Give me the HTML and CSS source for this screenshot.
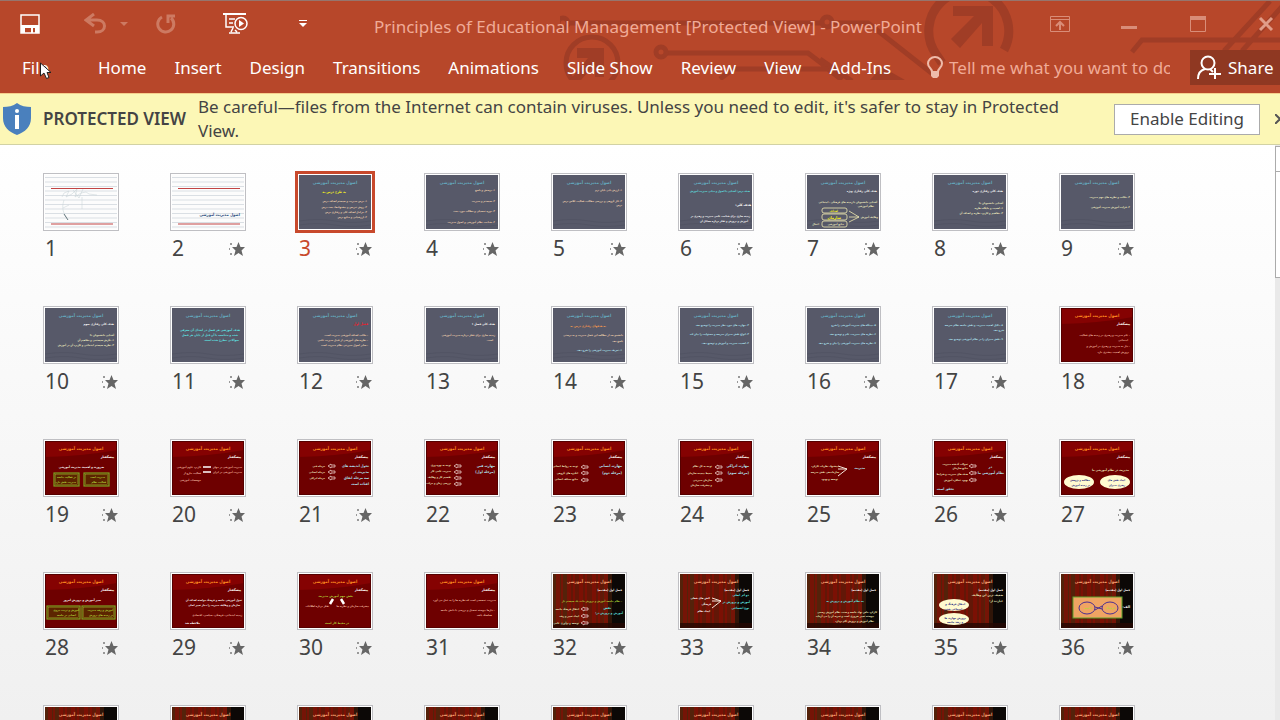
FILE: index.html
```html
<!DOCTYPE html>
<html lang="en">
<head>
<meta charset="utf-8">
<title>Principles of Educational Management [Protected View] - PowerPoint</title>
<link rel="stylesheet" href="styles.css">
</head>
<body>
<header class="ribbon">
  <svg class="circuit" width="720" height="79" viewBox="560 0 720 79" aria-hidden="true">
    <g fill="none" stroke="#a03d26" stroke-width="5">
      <circle cx="592" cy="62" r="26"/>
      <circle cx="563" cy="22" r="5"/>
      <path d="M569 22H822M832 22H868L934 74M667 52H808L842 78M733 68H828L842 79M733 68L720 78"/>
      <circle cx="661" cy="51" r="5"/>
      <circle cx="827" cy="21" r="5"/>
      <path d="M820 58L852 80"/>
      <path d="M1132 51L1142 39H1280M1270 0L1224 50M1287 0L1242 50"/>
    </g>
    <path fill="none" stroke="#a03d26" stroke-width="9" d="M942 62L936 53A40 40 0 1 1 1004 49"/>
    <path fill="#a03d26" d="M577 47H604V76H595V63L581 79H570L588 57H577ZM953 5H993V45H982V22L960 47L951 38L974 15H953ZM870 79L882 66L905 79Z"/>
  </svg>
  <div class="titlebar">
    <div class="quick">
      <button class="tool save" aria-label="Save"><svg width="20" height="20" viewBox="0 0 20 20"><path fill="none" stroke="#fff" stroke-width="1.500" d="M1 1H19V19H1Z"/><path fill="#fff" d="M1 11H19V19H15V14H13V19H11V14H5V19H1Z"/></svg></button>
      <button class="tool undo" aria-label="Undo"><svg width="44" height="22" viewBox="0 0 44 22"><path fill="none" stroke="#cd7a62" stroke-width="3" d="M10 1L2 7L10 13M2 7H13C23 7 23 19 13 19H11"/><path fill="#cd7a62" d="M36 9H44L40 13Z"/></svg></button>
      <button class="tool redo" aria-label="Repeat"><svg width="20" height="20" viewBox="0 0 20 20"><path fill="none" stroke="#cd7a62" stroke-width="3" d="M6 3A8 8 0 1 0 15 4M19 2H12V9"/></svg></button>
      <button class="tool show" aria-label="Start From Beginning"><svg width="25" height="22" viewBox="0 0 25 22"><g fill="none" stroke="#fff"><path stroke-width="2" d="M0 1H23"/><path stroke-width="1.500" d="M3 2V14H11M6 6H12M6 10H10M10 15L8 19M6 20H17M12 17L14 19"/><circle cx="18" cy="10.500" r="6" stroke-width="1.500"/></g><path fill="#fff" d="M16 7L21 10.500L16 14Z"/></svg></button>
      <button class="tool more" aria-label="Customize Quick Access Toolbar"><svg width="8" height="8" viewBox="0 0 8 8"><path fill="#fff" d="M0 0H8V1H0ZM0 3H8L4 7Z"/></svg></button>
    </div>
    <h1 class="doc-title">Principles of Educational Management [Protected View] - PowerPoint</h1>
    <div class="window-controls">
      <button aria-label="Ribbon Display Options"><svg width="20" height="16" viewBox="0 0 20 16"><path fill="none" stroke="#d98d78" d="M.5.5H19.500V15.500H.5ZM1 3.500H19"/><path fill="none" stroke="#d98d78" stroke-width="2" d="M10 14V6M6 10L10 6L14 10"/></svg></button>
      <button aria-label="Minimize"><svg width="16" height="16" viewBox="0 0 16 16"><path fill="#d98d78" d="M0 10H16V13H0Z"/></svg></button>
      <button aria-label="Maximize"><svg width="16" height="16" viewBox="0 0 16 16"><path fill="none" stroke="#d98d78" d="M.5.5H15.500V15.500H.5Z"/><path fill="#d98d78" d="M0 0H16V4H0Z"/></svg></button>
      <button class="close" aria-label="Close"><svg width="16" height="16" viewBox="0 0 16 16"><path fill="none" stroke="#e09c88" stroke-width="3" d="M2 2L14 14M14 2L2 14"/></svg></button>
    </div>
  </div>
  <div class="tabrow">
    <nav class="tabs">
      <button class="file">File</button>
      <button>Home</button>
      <button>Insert</button>
      <button>Design</button>
      <button>Transitions</button>
      <button>Animations</button>
      <button>Slide Show</button>
      <button>Review</button>
      <button>View</button>
      <button>Add-Ins</button>
    </nav>
    <label class="tell">
      <svg width="16" height="22" viewBox="0 0 16 22"><path fill="none" stroke="#eebbaa" stroke-width="2" d="M5 16C5 12 1 12 1 7.500A7 6.500 0 0 1 15 7.500C15 12 11 12 11 16Z"/><path fill="#eebbaa" d="M4 16H12V20L10 22H6L4 20Z"/></svg>
      <input type="text" placeholder="Tell me what you want to do" aria-label="Tell me what you want to do">
    </label>
    <button class="share"><svg width="24" height="25" viewBox="0 0 24 25"><g fill="none" stroke="#fff" stroke-width="2"><circle cx="11" cy="8" r="6.500"/><path d="M1 24C1 18 4 15 8 14M13 14L16 17M18 13V24M12 19H24"/></g></svg>Share</button>
  </div>
  <svg class="pointer" width="12" height="18" viewBox="0 0 12 18" aria-hidden="true"><path fill="#fff" stroke="#222" d="M.5 1V14L4 11L6.500 16.500L9 15.500L7 10.500H11Z"/></svg>
</header>
<section class="notice">
  <svg class="shield" width="28" height="32" viewBox="0 0 28 32" aria-hidden="true"><path fill="#4a80bd" d="M14 0C18 3 23 4 28 4V15C28 24 22 29 14 32C6 29 0 24 0 15V4C5 4 10 3 14 0Z"/><circle cx="14" cy="8" r="2" fill="#fff"/><path fill="#fff" d="M12 12H16V26H12Z"/></svg>
  <strong>PROTECTED VIEW</strong>
  <p>Be careful—files from the Internet can contain viruses. Unless you need to edit, it's safer to stay in Protected View.</p>
  <button class="enable">Enable Editing</button>
  <button class="dismiss" aria-label="Close message"><svg width="10" height="10" viewBox="0 0 10 10"><path stroke="#555" stroke-width="2" d="M0 0L10 10M10 0L0 10"/></svg></button>
</section>
<main class="sorter">
  <ol class="slides" id="slides"></ol>
  <div class="scroll" aria-hidden="true"><div class="scroll-up"></div><div class="scroll-thumb"></div></div>
</main>
<script src="slides.js"></script>
</body>
</html>
```
FILE: styles.css
```css
* { box-sizing: border-box; }
body {
  margin: 0;
  height: 100vh;
  display: flex;
  flex-direction: column;
  overflow: hidden;
  font: 17px/24px "Noto Sans", "Open Sans", sans-serif;
  color: #444;
}
button { font: inherit; color: inherit; background: none; border: 0; padding: 0; white-space: nowrap; }
svg { display: block; flex: none; }

.ribbon { position: relative; flex: none; background: #b7472a; border-top: 1px solid #96756d; color: #fff; overflow: hidden; }
.circuit { position: absolute; top: 0; right: 0; }
.titlebar, .tabrow { position: relative; display: flex; }
.titlebar { height: 49px; align-items: center; padding-bottom: 3px; }
.quick { display: flex; align-items: center; flex: none; width: 374px; padding-left: 20px; }
.undo { margin-left: 44px; }
.redo { margin-left: 28px; }
.show { margin-left: 47px; }
.more { margin-left: 51px; }
.doc-title { flex: 1; margin: 0; padding-top: 6px; font-size: 17px; font-weight: 400; color: #f0ab97; white-space: nowrap; }
.window-controls { display: flex; align-items: center; flex: none; }
.window-controls button { display: flex; justify-content: center; width: 69px; }
.window-controls .close { width: 48px; padding-left: 20px; }

.tabrow { height: 43px; align-items: flex-start; }
.tabs { display: flex; gap: 28px; padding: 6px 0 0 22px; flex: none; }
.tabs .file { width: 48px; text-align: left; }
.tell { display: flex; flex: 1; min-width: 0; margin: 6px 20px 0 36px; gap: 6px; }
.tell input { flex: 1; min-width: 0; padding: 0; border: 0; background: none; font: inherit; height: 24px; outline: 0; }
.tell input::placeholder { color: #f0ab97; opacity: 1; }
.share { display: flex; align-items: center; gap: 7px; flex: none; width: 90px; height: 35px; padding-left: 7px; background: #8f3822; }
.pointer { position: absolute; left: 40px; top: 61px; }

.notice { flex: none; display: flex; align-items: center; height: 52px; background: #fcf7b6; border-top: 1px solid #f6cf8c; border-bottom: 1px solid #d2d2a4; padding-left: 3px; overflow: hidden; }
.notice strong { margin-left: 12px; width: 145px; font-weight: 600; white-space: nowrap; }
.notice p { flex: 1; margin: 0 36px 0 10px; }
.enable { width: 146px; height: 31px; border: 1px solid #ababab; background: #fff; flex: none; }
.dismiss { margin-left: 15px; width: 5px; overflow: hidden; flex: none; }

.sorter { flex: 1; min-height: 0; display: flex; overflow: hidden; background: linear-gradient(#fff, #f0f0f0); }
.slides { flex: 1; list-style: none; margin: 0; padding: 28px 100px 0 43px; display: grid; grid-template-columns: repeat(auto-fill, 76px); gap: 41px 51px; align-content: start; }
.thumb { display: block; width: 76px; height: 58px; border: 1px solid #bfbfc3; padding: 1px; background: #fff; }
.current .thumb { border-color: #fff; outline: 3px solid #c8492c; outline-offset: -1px; }
.caption { display: flex; align-items: center; justify-content: space-between; height: 34px; padding: 0 1px 0 2px; font-size: 21px; color: #444; }
.caption svg { margin-top: 2px; }
.current .caption { color: #c8492c; }
.thumb text { font-family: "DejaVu Sans Condensed", "DejaVu Sans", sans-serif; font-weight: 700; direction: rtl; }
.scroll { width: 5px; flex: none; background: #e9e9e9; }
.scroll-up, .scroll-thumb { border: 1px solid #ababab; border-right: 0; background: #fff; }
.scroll-up { height: 26px; margin-top: 1px; }
.scroll-thumb { height: 106px; border-top: 0; }
```
FILE: slides.js
```js
// Text entries: [right edge, baseline, colour key, text, size]
const COLORS = { p: '#f0d2b0', y: '#f4f01c', w: '#fff', c: '#5de4e4', k: '#f0ecc0', r: '#f01c28', o: '#f59a4c', b: '#b0e4f4', g: '#b4d838', m: '#f0b8a0', n: '#20207c', d: '#2c5080' };
const TITLE = 'اصول مدیریت آموزشی';
const arrow = (x, y) => `<path d="M${x} ${y}l3-2v1h4v2h-4v1z" fill="#7a1010" stroke="#f3dfd8" stroke-width=".7"/>`;
const fan = (x, y, w) => `<path d="M${x} ${y}l-${w}-3M${x} ${y}h-${w}M${x} ${y}l-${w} 7" stroke="#f2e4d8" fill="none"/>`;
const oval = (x, y, rx, ry) => `<ellipse cx="${x}" cy="${y}" rx="${rx}" ry="${ry}" fill="#fffbd0"/>`;
const box = (x, y, w, h) => `<rect x="${x}" y="${y}" width="${w}" height="${h}" fill="#5c2400" stroke="#7da021" stroke-width="1.200"/><rect x="${x + 1.5}" y="${y + 1.5}" width="${w - 3}" height="${h - 3}" fill="none" stroke="#a5a52c" stroke-width=".4"/>`;
const HEAD = [69, 17, 'w', 'پیشگفتار', 3.3];
const CHAP = [69, 17, 'w', 'فصل اول (مقدمه)', 3];
const slate = (lines, art) => ({ theme: 'slate', lines, art });
const red = (lines, art) => ({ theme: 'red', lines: [HEAD, ...lines], art });
const curtain = (lines, art) => ({ theme: 'curtain', lines: [CHAP, ...lines], art });

const deck = [
  { theme: 'paper', lines: [], art: '<path d="M17 22l2-4 5-2-3 6 6-3 5-5-2 8 6-4 5-1 3 2 8 1M19 25c-3 9 0 14 3 18M28 15l6 8 4-9M24 30l-6 3M37 22v12" stroke="#c4d0d4" stroke-width=".5" fill="none"/><path d="M19 39l4 6" stroke="#66787e"/>' },
  { theme: 'paper', lines: [[68, 41, 'd', TITLE, 4]], art: '' },
  slate([[47, 18, 'y', 'به طرح درس به', 3.4], [68, 27, 'p', '۱- درس مدیریت و سیستم اهداف درس'], [68, 33, 'p', '۲- روش تدریس و پیشنهادها، بحث درس'], [68, 38, 'p', '۳- مراحل اهداف کلی و رفتاری درس'], [68, 43, 'p', '۴- ارزشیابی و منابع درس']]),
  slate([[69, 16, 'p', '۱- پرسش و پاسخ'], [69, 27, 'p', '۲- سیستم و مدیریت'], [69, 37, 'p', '۳- دوره تحصیلی و مطالب مورد بحث'], [69, 48, 'p', '۴- شناخت نظام آموزشی و اصول مدیریت']]),
  slate([[69, 16, 'p', '۱- ارزش یابی پایان ترم'], [69, 27, 'p', '۲- کار گروهی و بررسی مطالب، فعالیت کلاس درس'], [69, 31, 'p', 'درس']]),
  slate([[70, 17, 'c', 'هدف درس: آشنایی با اصول و مبانی مدیریت آموزش', 2.6], [71, 31, 'w', 'هدف کلی:', 3.4], [70, 42, 'w', 'زمینه سازی برای شناخت علمی مدیریت و رهبری در'], [68, 47, 'w', 'آموزش و پرورش و تفکر درباره مسائل آن']]),
  slate([[70, 17, 'w', 'هدف کلی رفتاری ویژه', 3], [70, 28, 'k', 'آشنایی دانشجویان با زمینه های فرهنگی - اجتماعی'], [67, 32, 'k', 'نظام آموزشی'], [31, 37, 'y', 'اهداف', 3], [34, 44, 'y', 'سازمان', 4], [37, 50, 'k', 'منابع آموزشی'], [71, 43, 'k', 'وظایف آموزش'], [12, 50, 'k', 'اعمال']], '<g fill="none" stroke="#efe9b0" stroke-width=".8"><rect x="15" y="33" width="25" height="5" rx="2"/><rect x="15" y="39" width="25" height="6" rx="2"/><rect x="15" y="46" width="25" height="6" rx="2"/><path d="M52 42L42 36M52 42H42M52 42L42 47"/></g>'),
  slate([[69, 17, 'w', 'هدف کلی رفتاری دوره', 3], [69, 29, 'k', 'آشنایی دانشجویان با:'], [69, 34, 'k', '۱- اهمیت و جایگاه نظریه'], [69, 39, 'k', '۲- مفاهیم و کاربرد نظریه و اهداف آن']]),
  slate([[69, 23, 'k', '۳- مکاتب و نظریه های مهم مدیریت'], [69, 33, 'k', '۴- فرایند آموزش مدیریت آموزشی']]),
  slate([[69, 17, 'w', 'هدف کلی رفتاری سوم', 3], [69, 28, 'k', 'آشنایی دانشجویان با:'], [69, 33, 'k', '۱- نگرش سیستمی و مفاهیم آن'], [69, 38, 'k', '۲- نظریه سیستم اجتماعی و کاربرد آن در آموزش']]),
  slate([[68, 23, 'c', 'هدف آموزشی هر فصل در ابتدای آن معرفی', 3.1], [66, 28, 'c', 'شده و متناسب با آن قبل از پایان هر فصل', 3], [67, 33, 'c', 'سوالاتی مطرح شده است.', 3]]),
  slate([[69, 17, 'r', 'فصل اول', 3.5], [69, 28, 'p', '- مکاتب اهداف آموزشی مدیریت است.'], [69, 33, 'p', '- نظریه های آموزشی از قبیل مدیریت علمی'], [69, 38, 'p', '- سایر اصول مدیریتی نظام مدیریت است']]),
  slate([[69, 17, 'w', 'هدف کلی فصل ۱', 3], [69, 28, 'p', 'زمینه سازی برای تفکر درباره مدیریت آموزشی'], [67, 33, 'p', 'است.']]),
  slate([[53, 19, 'o', 'به هدفهای رفتاری درس به', 3], [70, 28, 'p', 'دانشجو بعد از مطالعه این فصل مدیریت و به درستی'], [70, 34, 'p', 'پاسخ دهد'], [69, 43, 'b', '۱- تعریف مدیریت آموزشی را شرح دهد.']]),
  slate([[69, 18, 'b', '۲- مهارت های مورد نظر مدیریت را توضیح دهد'], [69, 27, 'b', '۳- انواع نقش مدیران مدرسه و مسئولیت را بیان کند'], [69, 36, 'b', '۴- اهمیت مدیریت و آموزش و توضیح دهد.']]),
  slate([[69, 18, 'b', '۵- دیدگاه های مدیریت آموزشی را شرح'], [69, 27, 'b', '۶- نظریه های مدیریت، علم و توضیح دهد'], [69, 36, 'b', '۷- نظریه های مدیریت آموزشی را بیان و شرح دهد']]),
  slate([[69, 18, 'b', '۸- دلایل اهمیت مدیریت و نقش جامعه نظام مدرسه'], [70, 23, 'b', 'شرح دهد'], [69, 32, 'b', '۹- نقش مدیران را در نظام آموزشی توضیح دهد']]),
  red([[69, 28, 'm', '- علم مدیریت و رهبری در زمینه های فعالیت'], [67, 33, 'm', 'اجتماعی'], [69, 39, 'm', '- نیاز به مدیریت و رهبری در آموزش و'], [68, 45, 'm', 'پرورش اهمیت بیشتری دارد']]),
  red([[59, 27, 'w', 'ضرورت و اهمیت مدیریت آموزشی', 3], [31, 37, 'g', 'در فعالیت جامعه'], [31, 42, 'g', 'مدیریت نقش دارد'], [60, 37, 'g', 'مدیریت است'], [61, 42, 'g', 'فعالیت نظام']], box(9, 32, 25, 13) + box(39, 32, 25, 13)),
  red([[70, 27, 'm', 'مدیریت آموزشی در جهان'], [70, 32, 'm', 'مدیریت آموزشی در ایران'], [29, 27, 'm', 'کاربرد علوم آموزشی'], [29, 33, 'm', 'فعالیت خارج از'], [29, 40, 'm', 'موسسات آموزشی']], '<path d="M31 26h8M31 31h8" stroke="#fff" stroke-width="1.500"/>'),
  red([[70, 26, 'b', 'تحول اندیشه های', 3.5], [70, 32, 'b', 'مدیریت در', 3.5], [70, 38, 'b', 'سه مرحله اتفاق', 3.5], [70, 44, 'b', 'افتاده است', 3.5], [26, 26, 'k', 'مرحله فنی'], [26, 32, 'k', 'مرحله انسانی'], [26, 38, 'k', 'مرحله ادراکی']], arrow(29, 25) + arrow(29, 31) + arrow(29, 37)),
  red([[69, 26, 'b', 'مهارت فنی', 3.6], [69, 32, 'b', '(مرحله اول)', 3.6], [25, 25, 'k', 'توجه به بهره وری'], [25, 31, 'k', 'مدیریت علمی کار'], [25, 37, 'k', 'تقسیم کار و وظایف'], [25, 43, 'k', 'بررسی زمان و حرکت']], arrow(28, 25) + arrow(28, 31) + arrow(28, 37) + arrow(28, 43)),
  red([[69, 26, 'b', 'مهارت انسانی', 3.6], [69, 33, 'b', '(مرحله دوم)', 3.6], [25, 26, 'k', 'توجه به روابط انسانی'], [25, 33, 'k', 'انگیزه های گروهی'], [25, 39, 'k', 'منابع مختلف انسانی']], arrow(28, 26) + arrow(28, 32) + arrow(28, 39)),
  red([[69, 26, 'b', 'مهارت ادراکی', 3.6], [69, 33, 'b', '(مرحله سوم)', 3.6], [32, 26, 'k', 'توجه به کل نظام'], [32, 33, 'k', 'محیط پیچیده سازمان'], [32, 40, 'k', 'سازمان مدیریتی'], [32, 45, 'k', 'و پیشرفت سازمان']], arrow(35, 26) + arrow(35, 32) + arrow(35, 39)),
  red([[58, 28, 'b', 'مدیریت', 3.2], [31, 26, 'k', 'پیشنهاد نظریات کارکرد'], [32, 32, 'k', 'سازماندهی نقش مدرسه'], [31, 39, 'k', 'توسعه و بهبود']], fan(40, 28, 9)),
  red([[58, 27, 'b', 'در', 3.5], [70, 33, 'b', 'نظام آموزشی ما', 3.5], [34, 24, 'k', 'تحولات گذشته مدیریت'], [34, 28, 'k', 'منابع سازمان'], [34, 34, 'k', 'هدف های مدیریت و شرایط'], [34, 40, 'k', 'بهبود عملکرد آموزش'], [20, 49, 'b', 'تحقق است', 3.5]], arrow(35, 25) + arrow(35, 32) + arrow(35, 39)),
  red([[68, 30, 'k', 'مدیریت در نظام آموزشی ما', 3], [64, 40, 'n', 'ایجاد نقش های'], [64, 45, 'n', 'رهبری مدیران'], [29, 40, 'n', 'مطالعه و پژوهش'], [29, 45, 'n', 'در زمینه آموزش']], oval(18, 41, 15, 7) + oval(54, 41, 15, 7)),
  red([[56, 27, 'w', 'سیر آموزش و پرورش امروز', 3], [34, 37, 'g', 'آموزش و تربیت نیروی'], [31, 42, 'g', 'انسانی در جامعه'], [68, 37, 'g', 'آموزش و رشد مدیریت'], [68, 42, 'g', 'در زمینه های پرورش']], box(2, 32, 33, 13) + box(37, 32, 33, 13)),
  red([[70, 27, 'w', 'تحول آموزشی جامعه و فرهنگ خواسته اهداف آن'], [68, 32, 'w', 'سازمان و وظایف مدیریت را دچار تغییر اصلی'], [70, 42, 'm', 'زمینه اجتماعی، فرهنگی، سیاسی، اقتصادی'], [28, 50, 'w', 'ملاحظه شد', 3]]),
  red([[54, 23, 'g', 'بخش مهم آموزش مدیریت', 3], [70, 33, 'm', 'پیشرفت سازمان و نظریه ها'], [30, 33, 'm', 'تفکر درباره اطلاعات'], [50, 50, 'g', 'در محیط کار است', 3]], '<path d="M34 25l-3 5M42 25l3 5" stroke="#fff" stroke-width="2.500"/>'),
  red([[70, 27, 'm', 'مدیریت، تخصصی است که نظریه ها را به عمل می آورد'], [69, 37, 'm', '- نیازها پیوسته تحصیل و بررسی با دانش جامعه'], [66, 42, 'm', 'هماهنگ باشد']]),
  curtain([[69, 28, 'g', '- نظام جامعه، آموزش و پرورش مانند یک سیستم باز'], [58, 35, 'c', 'نقش', 3.3], [70, 40, 'c', 'آموزش و پرورش در:', 3], [26, 36, 'k', 'انتقال فرهنگ جامعه'], [26, 43, 'k', 'ایجاد تغییر و رشد'], [26, 50, 'k', 'توسعه و نوآوری علمی']], arrow(28, 35) + arrow(28, 42) + arrow(28, 49)),
  curtain([[69, 22, 'c', 'دو اثر اصلی', 3.1], [70, 29, 'c', 'آموزش و پرورش در', 3.1], [69, 35, 'c', 'نوع اجتماعی', 3.1], [30, 25, 'w', 'کنش های شغلی', 2.7], [31, 31, 'w', 'فرهنگی', 2.7], [30, 38, 'w', 'ایجاد نظام', 2.7]], fan(41, 27, 9)),
  curtain([[57, 28, 'c', 'به نظام آموزش و پرورش به', 3], [70, 39, 'k', 'کارکرد خاص نهاد جامعه و سنت نظام آموزش رسمی'], [67, 43, 'k', 'پیوسته تغییر ضروری است و تجربه آن را می آزماید'], [67, 48, 'k', 'نظام آموزش و پرورش گام بردارد']]),
  curtain([[69, 22, 'k', 'ضعیف ترین این وظایف', 3], [69, 28, 'k', 'عبارتند از:', 3], [31, 31, 'n', 'انتقال فرهنگ و', 2.8], [28, 36, 'n', 'اجتماعی شدن', 2.8], [32, 45, 'n', 'پرورش مهارت ها', 2.8], [29, 49, 'n', 'و رشد جامعه', 2.8]], oval(20, 31, 15, 6) + oval(20, 45, 15, 6)),
  curtain([[69, 34, 'w', 'الف-', 3.6], [31, 35, 'g', 'جامعه', 3], [54, 35, 'g', 'فرهنگ', 3]], '<rect x="12" y="23" width="49" height="21" fill="#f0a463" stroke="#5ca32c"/><g fill="none" stroke="#4b2f91" stroke-width="1"><ellipse cx="26" cy="34" rx="8" ry="6"/><ellipse cx="49" cy="34" rx="8" ry="6"/><path d="M34 33l7 2M34 36l7-4"/></g>')
];
while (deck.length < 45) deck.push({ theme: 'curtain', lines: [] });

const stripes = [3, 8, 14, 20, 26, 32, 39, 45, 51].map((x, i) => `<rect x="${x}" width="${i % 2 ? 2 : 4}" height="54" fill="#8c0b04" opacity=".6"/>`).join('');
const ruled = Array.from({ length: 12 }, (_, i) => `<path d="M0 ${2.5 + i * 4.5}H72" stroke="#ccd3da" stroke-width=".7"/>`).join('');
const backgrounds = {
  paper: `<rect width="72" height="54" fill="#fcfcfc"/>${ruled}<path d="M6 13.500H68M6 49H68" stroke="#c24444"/>`,
  slate: '<rect width="72" height="54" fill="#575969"/><path d="M0 46q20-3 36 0t36 0M0 50q20-3 36 0t36 0" stroke="#525464" fill="none"/>',
  red: '<rect width="72" height="54" fill="#6e0000"/><path d="M0 0H72V9Q40 15 0 16Z" fill="#850202"/><rect x=".5" y=".5" width="71" height="53" fill="none" stroke="#560000"/>',
  curtain: `<rect width="72" height="54" fill="#54220a"/><rect x="16" width="34" height="54" fill="#700c04" opacity=".5"/>${stripes}<rect x="59" width="13" height="54" fill="#0c0806"/><rect x="55" width="5" height="54" fill="#0c0806" opacity=".5"/><rect y="49" width="72" height="5" fill="#260703" opacity=".8"/>`
};
const titleColors = { slate: '#64a9be', red: '#ff8c20', curtain: '#f6a070' };
const star = '<svg width="16" height="15" viewBox="0 0 16 15" aria-hidden="true"><path fill="#666" d="M9.500 0L11.500 5H16L12.500 8.500L14 14L9.500 11L5 14L6.500 8.500L3 5H7.500Z"/><path fill="#999" d="M1 1H3V3H1ZM0 6H1V8H0ZM1 11H3V13H1Z"/></svg>';

function draw({ theme, lines, art = '' }) {
  const title = titleColors[theme] ? `<text x="36" y="9" text-anchor="middle" font-size="4.400" fill="${titleColors[theme]}">${TITLE}</text>` : '';
  const text = lines.map(([x, y, color, words, size = 2.6]) => `<text x="${x}" y="${y}" font-size="${size}" fill="${COLORS[color]}">${words}</text>`).join('');
  return `<svg width="72" height="54" viewBox="0 0 72 54">${backgrounds[theme]}${art}${title}${text}</svg>`;
}

document.getElementById('slides').innerHTML = deck.map((slide, i) => `
  <li class="${i === 2 ? 'current' : ''}">
    <button class="thumb" aria-label="Slide ${i + 1}">${draw(slide)}</button>
    <div class="caption"><span>${i + 1}</span>${i ? star : ''}</div>
  </li>`).join('');
```
